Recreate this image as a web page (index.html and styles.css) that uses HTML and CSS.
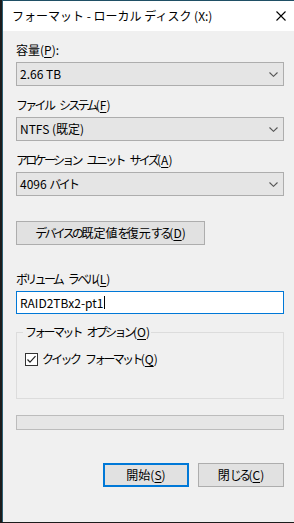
FILE: index.html
```html
<!DOCTYPE html>
<html lang="ja">
<head>
<meta charset="utf-8">
<title>フォーマット</title>
<link rel="stylesheet" href="styles.css">
</head>
<body>
<div class="frame">
  <div class="window">
    <div class="titlebar">
      <span class="title">フォーマット - ローカル ディスク (X:)</span>
      <svg class="close" width="10" height="10" viewBox="0 0 10 10"><path d="M0.5 0.5 L9.5 9.5 M9.5 0.5 L0.5 9.5" stroke="#000" stroke-width="1.1" fill="none"/></svg>
    </div>
    <div class="content">
      <div class="label">容量(<u>P</u>):</div>
      <div class="select"><span>2.66 TB</span><svg class="chev" width="9" height="5" viewBox="0 0 9 5"><path d="M0.5 0.5 L4.5 4.3 L8.5 0.5" stroke="#555" stroke-width="1.1" fill="none"/></svg></div>

      <div class="label"><span class="k">ファイル</span> <span class="k ws">システム</span>(<u>F</u>)</div>
      <div class="select"><span>NTFS (既定)</span><svg class="chev" width="9" height="5" viewBox="0 0 9 5"><path d="M0.5 0.5 L4.5 4.3 L8.5 0.5" stroke="#555" stroke-width="1.1" fill="none"/></svg></div>

      <div class="label"><span class="k">アロケーション</span> <span class="k ws">ユニット</span> <span class="k ws">サイズ</span>(<u>A</u>)</div>
      <div class="select last"><span>4096 <span class="k">バイト</span></span><svg class="chev" width="9" height="5" viewBox="0 0 9 5"><path d="M0.5 0.5 L4.5 4.3 L8.5 0.5" stroke="#555" stroke-width="1.1" fill="none"/></svg></div>

      <div class="btn restore"><span class="k">デバイスの</span>既定値<span class="k">を</span>復元<span class="k">する</span>(<u>D</u>)</div>

      <div class="label"><span class="k">ボリューム</span> <span class="k ws">ラベル</span>(<u>L</u>)</div>
      <div class="input"><span>RAID2TBx2-pt1</span><span class="caret"></span></div>

      <fieldset class="group">
        <legend><span class="k">フォーマット</span> <span class="k ws">オプション</span>(<u>O</u>)</legend>
        <div class="check-row">
          <svg class="checkbox" width="13" height="13" viewBox="0 0 13 13"><rect x="0.5" y="0.5" width="12" height="12" fill="#fff" stroke="#333"/><path d="M2.5 6.5 L5 9.2 L10.5 3.2" stroke="#222" stroke-width="1.2" fill="none"/></svg>
          <span><span class="k">クイック</span> <span class="k ws">フォーマット</span>(<u>Q</u>)</span>
        </div>
      </fieldset>

      <div class="progress"></div>

      <div class="actions">
        <div class="btn action primary">開始(<u>S</u>)</div>
        <div class="btn action">閉<span class="k">じる</span>(<u>C</u>)</div>
      </div>
    </div>
  </div>
</div>
</body>
</html>
```

FILE: styles.css
```css
* { box-sizing: border-box; }
html, body {
  margin: 0;
  padding: 0;
  background: #f0f0f0;
}
body {
  font-family: "Noto Sans CJK JP", "Noto Sans", sans-serif;
  font-size: 12px;
  color: #000;
}
.frame {
  width: 294px;
  height: 523px;
  border-left: 2px solid #1c1c1c;
  border-bottom: 1px solid #1c1c1c;
  background: #f0f0f0;
}
.window {
  height: 100%;
  border-left: 1px solid #2d5f74;
  border-top: 1px solid #1f4f65;
  display: flex;
  flex-direction: column;
}
.titlebar {
  height: 30px;
  background: #fff;
  display: flex;
  align-items: center;
  justify-content: space-between;
  padding: 0 8px 0 9px;
  flex-shrink: 0;
}
.title {
  line-height: 16px;
  font-size: 12px;
}
.close {
  display: block;
}
.content {
  padding: 11px 10px 0 13px;
  display: flex;
  flex-direction: column;
}
.k {
  letter-spacing: -2.7px;
}
.ws {
  margin-left: 3px;
}
.label {
  height: 16px;
  line-height: 16px;
  margin-bottom: 4px;
  white-space: nowrap;
}
u { text-decoration: underline; text-underline-offset: 2px; }
.select {
  height: 24px;
  border: 1px solid #adadad;
  background: #e5e5e5;
  display: flex;
  align-items: center;
  justify-content: space-between;
  padding: 0 5px 0 3px;
  margin-bottom: 11px;
  line-height: 16px;
}
.select.last { margin-bottom: 25px; }
.chev { display: block; }
.btn {
  height: 24px;
  border: 1px solid #adadad;
  background: #e1e1e1;
  display: flex;
  align-items: center;
  justify-content: center;
  line-height: 16px;
  white-space: nowrap;
}
.restore {
  width: 189px;
  margin-bottom: 26px;
}
.input {
  height: 23px;
  border: 1px solid #0078d7;
  background: #fff;
  display: flex;
  align-items: center;
  padding-left: 3px;
  line-height: 16px;
  margin-bottom: 10px;
}
.caret {
  display: block;
  width: 1px;
  height: 13px;
  background: #000;
  margin-left: 1px;
}
.group {
  margin: 0;
  height: 75px;
  border: 1px solid #dcdcdc;
  padding: 11px 8px 0 8px;
  min-width: 0;
}
.group legend {
  padding: 0 1px 0 2px;
  margin-left: -2px;
  line-height: 16px;
  height: 16px;
}
.check-row {
  display: flex;
  align-items: center;
  gap: 4px;
  height: 16px;
  line-height: 16px;
}
.checkbox { display: block; }
.progress {
  margin-top: 16px;
  height: 15px;
  border: 1px solid #bcbcbc;
  background: #e6e6e6;
}
.actions {
  margin-top: 33px;
  display: flex;
  justify-content: flex-end;
  gap: 9px;
}
.action { width: 86px; }
.primary {
  border: 2px solid #0078d7;
}
```
